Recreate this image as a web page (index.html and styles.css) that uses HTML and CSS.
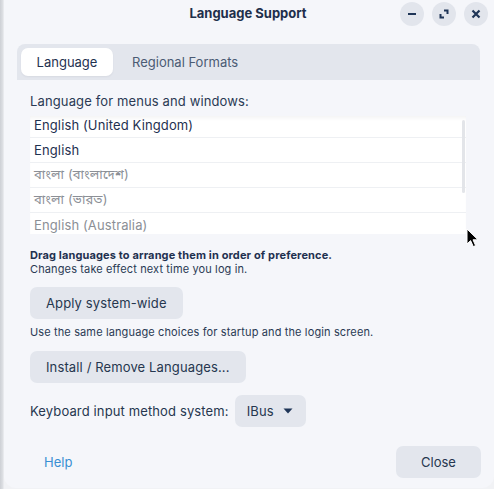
FILE: index.html
```html
<!DOCTYPE html>
<html lang="en">
<head>
<meta charset="utf-8">
<title>Language Support</title>
<link rel="stylesheet" href="styles.css">
</head>
<body>
<div class="desktop">
  <div class="window">
    <header class="titlebar">
      <div class="spacer"></div>
      <div class="title">Language Support</div>
      <div class="controls">
        <button class="wbtn" aria-label="Minimize">
          <svg width="10" height="10" viewBox="0 0 10 10"><rect x="1" y="4" width="8" height="2" fill="#1f3557"/></svg>
        </button>
        <button class="wbtn" aria-label="Maximize">
          <svg width="10" height="10" viewBox="0 0 10 10"><path d="M5 1.5H8.5V5" fill="none" stroke="#1f3557" stroke-width="2"/><path d="M1.5 5V8.5H5" fill="none" stroke="#1f3557" stroke-width="2"/></svg>
        </button>
        <button class="wbtn" aria-label="Close">
          <svg width="10" height="10" viewBox="0 0 10 10"><path d="M1.5 1.5L8.5 8.5M8.5 1.5L1.5 8.5" fill="none" stroke="#1f3557" stroke-width="2.2"/></svg>
        </button>
      </div>
    </header>

    <div class="tabs">
      <div class="tab active">Language</div>
      <div class="tab">Regional Formats</div>
    </div>

    <section class="panel">
      <p class="label">Language for menus and windows:</p>
      <div class="list">
        <div class="list-inner">
          <div class="row">English (United Kingdom)</div>
          <div class="row">English</div>
          <div class="row dim">বাংলা (বাংলাদেশ)</div>
          <div class="row dim">বাংলা (ভারত)</div>
          <div class="row dim last">English (Australia)</div>
        </div>
        <div class="scrollbar"></div>
      </div>
      <p class="hint hint-first"><strong>Drag languages to arrange them in order of preference.</strong><br>Changes take effect next time you log in.</p>
      <button class="btn">Apply system-wide</button>
      <p class="hint hint-second">Use the same language choices for startup and the login screen.</p>
      <button class="btn btn-install">Install / Remove Languages...</button>
      <div class="kbd-row">
        <span class="kbd-label">Keyboard input method system:</span>
        <button class="btn dropdown">IBus
          <svg width="10" height="6" viewBox="0 0 10 6"><path d="M0.5 0.5H9.5L5 5.5Z" fill="#1f3557"/></svg>
        </button>
      </div>
    </section>

    <footer class="footer">
      <button class="link">Help</button>
      <button class="btn close">Close</button>
    </footer>
  </div>
  <svg class="cursor" width="14" height="20" viewBox="0 0 14 20">
    <path d="M1 1V16L4.6 12.6L7.3 18.6L9.6 17.6L7 11.8H12Z" fill="#000" stroke="#fff" stroke-width="1" stroke-linejoin="round"/>
  </svg>
</div>
</body>
</html>
```

FILE: styles.css
```css
* { box-sizing: border-box; }

html, body {
  margin: 0;
  padding: 0;
}

body {
  width: 494px;
  height: 489px;
  overflow: hidden;
  font-family: Inter, "Noto Sans", "Noto Sans Bengali", sans-serif;
  color: #26374f;
  background: linear-gradient(to right, #cdd0d5 0, #dfe1e5 3px, #f1f2f5 4px);
}

.desktop {
  position: relative;
  width: 494px;
  height: 489px;
  padding-left: 4px;
}

.window {
  width: 490px;
  height: 488px;
  background: #f5f6fa;
  border-radius: 0 0 12px 12px;
  display: flex;
  flex-direction: column;
}

button {
  font-family: inherit;
  border: none;
  margin: 0;
  cursor: default;
  letter-spacing: inherit;
}

/* Title bar */
.titlebar {
  height: 26px;
  display: grid;
  grid-template-columns: 1fr auto 1fr;
  align-items: center;
  padding: 0 6px 0 4px;
}

.title {
  font-size: 13px;
  font-weight: 700;
  color: #1e2f4b;
  text-align: center;
}

.controls {
  display: flex;
  justify-content: flex-end;
  gap: 8px;
  padding-top: 1px;
}

.wbtn {
  width: 24px;
  height: 24px;
  border-radius: 50%;
  background: #e2e5ec;
  padding: 0;
  display: flex;
  align-items: center;
  justify-content: center;
}

/* Tabs */
.tabs {
  margin: 18px 14px 0 13px;
  height: 36px;
  background: #e3e6ed;
  border-radius: 8px 8px 0 0;
  padding: 4px;
  display: flex;
  gap: 0;
}

.tab {
  height: 28px;
  padding: 0 16px 0 15px;
  display: flex;
  align-items: center;
  font-size: 13px;
  color: #4b5b74;
  border-radius: 7px;
}

.tab.active {
  width: 92px;
  justify-content: center;
  padding: 0;
  background: #ffffff;
  color: #1f3150;
  box-shadow: 0 1px 2px rgba(30, 40, 60, 0.06);
}

.tab + .tab {
  margin-left: 4px;
}

/* Panel */
.panel {
  padding: 13px 28px 0 26px;
  letter-spacing: 0.008em;
}

.label {
  margin: 0 0 7px;
  font-size: 13px;
  line-height: 16px;
  color: #2a3a54;
}

.list {
  position: relative;
  height: 118px;
  background: #ffffff;
  overflow: hidden;
  box-shadow: inset 0 4px 4px -2px rgba(0, 0, 0, 0.05);
}

.list-inner {
  margin-top: -3px;
}

.row {
  height: 25px;
  padding-left: 4px;
  display: flex;
  align-items: center;
  font-size: 13px;
  color: #1f3150;
  border-bottom: 1px solid #eef0f3;
}

.row.dim {
  color: #8b8f96;
}

.scrollbar {
  position: absolute;
  top: 4px;
  right: 1px;
  width: 3px;
  height: 73px;
  border-radius: 2px;
  background: #e3e5e9;
}

.hint {
  font-size: 11px;
  line-height: 14px;
  margin: 0;
  color: #2a3a54;
}

.hint strong {
  font-weight: 700;
  color: #1f3150;
}

.hint-first {
  margin: 14px 0 11px;
}

.hint-second {
  margin: 6px 0 12px;
}

.btn {
  height: 32px;
  padding: 0 16px;
  border-radius: 7px;
  background: #e3e6ed;
  color: #26374f;
  font-size: 13px;
  display: flex;
  align-items: center;
}

.btn-install {
  margin-bottom: 12px;
}

.kbd-row {
  display: flex;
  align-items: center;
  gap: 6px;
  font-size: 13px;
}

.dropdown {
  padding: 0 13px 0 12px;
  gap: 9px;
}

/* Footer */
.footer {
  margin-top: 19px;
  padding: 0 13px 0 26px;
  display: flex;
  justify-content: space-between;
  align-items: center;
}

.link {
  background: none;
  padding: 0 14px;
  height: 32px;
  font-size: 13px;
  color: #3a8fd3;
}

.close {
  width: 85px;
  justify-content: center;
  padding: 0;
}

.cursor {
  position: absolute;
  left: 466px;
  top: 228px;
}
```
